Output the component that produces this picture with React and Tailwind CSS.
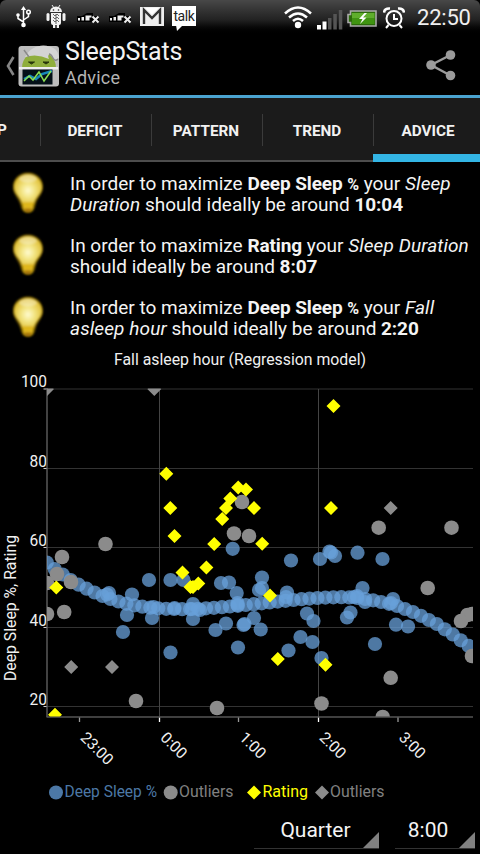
import { useId } from 'react';

const TABS = ['DEFICIT', 'PATTERN', 'TREND', 'ADVICE'];

const Y_TICKS = [
  { label: '100', y: 389 },
  { label: '80', y: 468.5 },
  { label: '60', y: 547.5 },
  { label: '40', y: 627.5 },
  { label: '20', y: 706.5 },
];

const X_TICKS = [
  { label: '23:00', x: 79.5 },
  { label: '0:00', x: 159.5, major: true },
  { label: '1:00', x: 238.5 },
  { label: '2:00', x: 318.5, major: true },
  { label: '3:00', x: 398 },
];

// Regression curve, one sample every 6 minutes
const CURVE_START = 46.8;
const CURVE_STEP = 7.96;
const CURVE = [
  562.5, 569, 574.5, 580, 584.7, 588.7, 592.5, 596, 599, 601.5, 603.7, 605.3, 606.7, 607.7,
  608.3, 608.8, 609, 609.2, 609.1, 608.8, 608.3, 607.8, 607.2, 606.5, 605.8, 605, 604.2,
  603.3, 602.5, 601.6, 600.8, 600, 599.2, 598.6, 598, 597.6, 597.3, 597.2, 597.4, 597.9,
  599, 600.3, 602, 603.8, 606, 609, 612, 615.8, 620, 624, 629.3, 634.5, 640.3, 645.9,
];

const DEEP_SLEEP = [
  [149, 580], [132, 594.5], [127, 615], [123, 632], [152, 618], [107, 594.5], [109, 593],
  [153.5, 607], [170.5, 580], [183.5, 580], [193, 604], [193, 619], [170.5, 652.5],
  [174.5, 608], [192, 609], [200, 610], [221, 583], [229, 582.5], [232.7, 548.8],
  [236.7, 593], [237.5, 603], [237.5, 605], [215.5, 630], [226, 623.5], [238, 647.5],
  [243.5, 625], [244.5, 624], [254, 618], [260.7, 629.5], [262, 577.5], [259, 590],
  [262, 588], [291, 560.5], [287, 592.5], [286, 597], [288.5, 650.5], [307, 613.5],
  [313.5, 621], [300.5, 637], [312.5, 642], [321.5, 658], [320, 559], [329.5, 551.5],
  [331, 552.5], [335, 556], [357.5, 552.7], [382.5, 559], [362.5, 588], [354, 597],
  [357, 596], [365, 602], [393, 599], [391, 603], [350.5, 612.5], [347, 617.5],
  [396, 624.7], [408, 626.5], [375, 644],
];

const DEEP_SLEEP_OUTLIERS = [
  [62, 557], [105.5, 544], [57, 574], [71, 582], [47, 583], [47, 614], [64.2, 612],
  [136, 701], [217, 708], [242, 502], [234, 533.5], [249, 536], [321.5, 703.5],
  [378.7, 527.7], [451.5, 527.7], [427.7, 588], [461, 621], [467.5, 615], [472, 614],
  [472, 656], [390.7, 677.8], [382.7, 717],
];

const RATING = [
  [166.3, 473.7], [170.3, 508], [174.5, 536], [182.5, 572.5], [190.5, 587], [193, 587],
  [198.3, 583.5], [206.4, 567.5], [214.2, 544], [222.2, 519], [226, 508], [230.3, 498.5],
  [238.2, 487.5], [246, 489.5], [254, 508], [262.2, 543.7], [270, 595.5], [277.8, 659],
  [333.5, 406], [331, 508], [325.5, 664.7], [56.3, 587.5], [55, 714.7],
];

const RATING_OUTLIERS = [[47, 389], [154.3, 389], [71.2, 667], [112, 667], [390.7, 508]];

const diamond = ([x, y], r = 7) => `M${x} ${y - r}l${r} ${r}l${-r} ${r}l${-r} ${-r}z`;

const UsbIcon = () => (
  <svg className="w-[17px] h-[22px] shrink-0" viewBox="0 0 16 22" fill="none" stroke="#fff" strokeWidth="1.5">
    <path d="M8 3v15M8 16l-5.500-3.500V9M8 14l5-3.500V7" />
    <path d="M8 0l2.600 4H5.400z" fill="#fff" stroke="none" />
    <circle cx="8" cy="19" r="2.300" fill="#fff" stroke="none" />
    <circle cx="2.500" cy="9" r="1.800" fill="#fff" stroke="none" />
    <circle cx="13" cy="6" r="1.800" />
  </svg>
);

const DebugIcon = () => (
  <svg className="w-5 h-6 shrink-0" viewBox="0 0 20 24" fill="#f2f2f2">
    <path d="M4 7a6 5.500 0 0 1 12 0zM5 8h10v10q0 2-2 2v3h-2.300v-3H9.300v3H7v-3q-2 0-2-2z" />
    <path d="M6 0l2 3M14 0l-2 3" stroke="#f2f2f2" />
    <rect x="0.500" y="8" width="3" height="8" rx="1.500" />
    <rect x="16.500" y="8" width="3" height="8" rx="1.500" />
    <path d="M7 9l2 2l2-2l2 2M7 12l2 2l2-2l2 2M7 15l2 2l2-2l2 2M10 9v10" stroke="#666" strokeWidth="1" fill="none" />
    <circle cx="7.500" cy="5" r="0.800" fill="#222" />
    <circle cx="12.500" cy="5" r="0.800" fill="#222" />
  </svg>
);

const NoSignalIcon = () => (
  <svg className="w-[23px] h-3 shrink-0" viewBox="0 0 23 12">
    <path d="M0 4h5l5-3h6v3l6 0v6H0z" fill="#000" />
    <path d="M1 6h2v2.500H1zM4.500 5H7v3.500H4.500zM8.500 3.500h6v2h-2v3h-4z" fill="#eee" />
    <path d="M15.500 4.500l6 6M21.500 4.500l-6 6" stroke="#eee" strokeWidth="2" />
  </svg>
);

const MailIcon = () => (
  <svg className="w-6 h-[19px] shrink-0" viewBox="0 0 24 19">
    <path d="M0 0h24v19H0z" fill="#eee" />
    <path d="M4 17V3l8 8l8-8v14" fill="none" stroke="#333" strokeWidth="2.400" />
    <path d="M5 .8l7 6.700l7-6.700" fill="#fff" />
  </svg>
);

const WifiIcon = () => (
  <svg className="w-7 h-6 shrink-0" viewBox="0 0 28 24" fill="none" stroke="#fff" strokeWidth="2.500">
    <path d="M1 7.500q13-12 26 0M5 11.500q9-8 18 0M9 15q5-4.500 10 0" />
    <circle cx="14" cy="19" r="3.200" fill="#fff" stroke="none" />
  </svg>
);

const SignalIcon = () => (
  <svg className="w-[26px] h-5 shrink-0" viewBox="0 0 26 20">
    <path d="M0 15h4v4.500H0zM5.500 11.500h4v8h-4z" fill="#fff" />
    <path d="M11 8h3.500v11.500H11zM16.300 4h3.500v15.500h-3.500zM21.800 0h3.500v19.500h-3.500z" fill="#555" />
  </svg>
);

const BatteryIcon = () => (
  <svg className="w-[30px] h-[17px] shrink-0" viewBox="0 0 30 17">
    <path d="M3.500 1H29v15H3.500v-3.500H1v-8h2.500z" fill="#2c6a0a" stroke="#aaa" strokeWidth="1.600" />
    <path d="M5 3h22.500v5.500H5z" fill="#5fae2c" />
    <path d="M5 8.500h22.500V14H5z" fill="#3f9410" />
    <path d="M17.500 3l-5.500 6h3.500l-2.500 5l6.500-6.500h-3.500l4-4.500z" fill="#fff" />
  </svg>
);

const AlarmIcon = () => (
  <svg className="w-[22px] h-[22px] shrink-0" viewBox="0 0 22 22" fill="none" stroke="#fff" strokeWidth="2">
    <circle cx="11" cy="11.500" r="7.500" />
    <path d="M11 7v5h4M5.500 18l-2.500 3M16.500 18l2.500 3" />
    <path d="M1 5.500Q1.500 1 7 1.500M21 5.500Q20.500 1 15 1.500" strokeWidth="2.600" />
  </svg>
);

const StatusBar = () => (
  <div className="h-9 flex items-center bg-linear-to-b from-[#484848] via-[#222] via-55% to-black rounded-t-md pl-[15px]">
    <div className="-mt-[3px]"><UsbIcon /></div>
    <div className="ml-[14px] -mt-[2px]"><DebugIcon /></div>
    <div className="ml-[11px] -mt-px"><NoSignalIcon /></div>
    <div className="ml-[9px] -mt-px"><NoSignalIcon /></div>
    <div className="ml-2 -mt-[3px]"><MailIcon /></div>
    <div className="relative ml-2 -mt-[5px] w-6 h-5 bg-white text-[#222] text-[14px] leading-[20px] text-center">
      <span className="tracking-[-0.4px]">talk</span>
      <svg className="absolute left-1 top-[19px] w-2 h-[6px]" viewBox="0 0 8 6">
        <path d="M0 0h7L1 6z" fill="#fff" />
      </svg>
    </div>
    <div className="ml-[88px] -mt-px"><WifiIcon /></div>
    <div className="ml-[5px] mt-[3px]"><SignalIcon /></div>
    <div className="ml-1"><BatteryIcon /></div>
    <div className="ml-[6px] -mt-px"><AlarmIcon /></div>
    <div className="ml-3 text-[22px] leading-none tracking-[-0.2px] text-[#f0f0f0] whitespace-nowrap">22:50</div>
  </div>
);

const AppIcon = () => (
  <svg className="w-[42px] h-[42px] shrink-0" viewBox="0 0 42 42">
    <rect x="0.500" y="1" width="40.500" height="40.500" rx="3" fill="#bdbdbd" />
    <path d="M4 23C4 12 13 6 21 6s17 6 17 17z" fill="#8fae3c" />
    <path d="M7 12C14-1 28-2 37 4q4 4 4 9l-4 2l-5-6q-3 1-1 5q-12-6-24-2z" fill="#d4d4d4" />
    <path d="M6 5l5 7M31 9q2 0 4 4t5 1" stroke="#8a8a8a" strokeWidth="1.500" fill="none" />
    <path d="M10.500 17h6l-3 2zM25 17h6l-3 2z" fill="#26350a" stroke="#26350a" />
    <path d="M1 22h39v2.500H1z" fill="#eee" />
    <rect x="4.500" y="24.500" width="30" height="15" fill="#041018" />
    <path d="M6 34l6-3l6 3l6-5l10-3" stroke="#1689b8" strokeWidth="2.500" fill="none" />
    <path d="M6 36l5-5l4 4l6-8l5 9l7-10" stroke="#8be052" strokeWidth="1.500" fill="none" />
  </svg>
);

const ActionBar = () => (
  <header className="h-[59px] flex items-center pl-[5px] pr-6">
    <svg className="w-[10px] h-5 shrink-0 mt-px" viewBox="0 0 10 20" fill="none" stroke="#858585" strokeWidth="2.600">
      <path d="M8.500 1L3 10l5.500 9" />
    </svg>
    <div className="ml-[3px] mt-px"><AppIcon /></div>
    <div className="ml-[5px] -mt-[3px]">
      <h1 className="-mt-px mb-px text-[25px] leading-[28px] tracking-[-0.2px] text-[#f3f3f3]">SleepStats</h1>
      <p className="text-[18px] leading-[22px] tracking-[0.2px] text-[#b4b4b4]">Advice</p>
    </div>
    <svg className="w-[30px] h-8 ml-auto -mt-px" viewBox="0 0 30 32" fill="#9b9b9b">
      <path d="M24.500 6L5 16l19.500 10.500" fill="none" stroke="#9b9b9b" strokeWidth="2.400" />
      <circle cx="24.500" cy="6" r="4.800" />
      <circle cx="5" cy="16" r="4.800" />
      <circle cx="24.500" cy="26.500" r="4.800" />
    </svg>
  </header>
);

const TabBar = () => (
  <nav className="h-[67px] flex border-t-[3px] border-[#4aa3d0] bg-[#1b1b1b] text-[15.3px] font-bold text-[#f2f2f2] overflow-hidden">
    <div className="w-10 shrink-0 border-b-2 border-[#4d4d4d] leading-[65px]">
      <span className="-ml-[3px]">P</span>
    </div>
    {TABS.map((tab) => (
      <div
        key={tab}
        className={
          tab === 'ADVICE'
            ? 'w-[111px] shrink-0 flex items-center border-b-8 border-[#33b5e5]'
            : 'w-[111px] shrink-0 flex items-center border-b-2 border-[#4d4d4d]'
        }
      >
        <span
          className={
            tab === 'ADVICE'
              ? 'flex-1 h-8 mt-[7px] pr-[2px] border-l border-[#3b3b3b] text-center leading-[34px]'
              : 'flex-1 h-8 mt-px pr-[2px] border-l border-[#3b3b3b] text-center leading-[34px]'
          }
        >
          {tab}
        </span>
      </div>
    ))}
  </nav>
);

const Bulb = () => {
  const id = useId();
  return (
    <svg className="w-9 h-12 shrink-0" viewBox="0 0 36 48">
      <defs>
        <radialGradient id={`${id}glass`} cx="50%" cy="55%" r="58%">
          <stop offset="0" stopColor="#fffbd0" />
          <stop offset="0.400" stopColor="#f3e585" />
          <stop offset="1" stopColor="#dcb928" />
        </radialGradient>
        <filter id={`${id}glow`} x="-20%" y="-20%" width="140%" height="140%">
          <feGaussianBlur stdDeviation="1.300" />
        </filter>
        <filter id={`${id}soft`} x="-10%" y="-10%" width="120%" height="120%">
          <feGaussianBlur stdDeviation="0.900" />
        </filter>
      </defs>
      <path
        d="M18 3.500C9 3.500 3 10 3 18C3 25 8 28 10.500 36q1 7.500 7.500 8q6.500-.5 7.500-8c2-8 7.500-11 7.500-18C33 10 27 3.500 18 3.500z"
        fill="#6e5606"
        filter={`url(#${id}glow)`}
      />
      <g filter={`url(#${id}soft)`}>
        <path
          d="M18 5C10.500 5 4 10.500 4 18C4 25 10.500 27.500 12 35h12c1.500-7.500 8-10 8-17C32 10.500 25.500 5 18 5z"
          fill={`url(#${id}glass)`}
        />
        <path d="M12 33h12l-1 6q-1 4-5 4t-5-4z" fill="#dfb71c" />
        <path d="M14 39.500h8l-1 2q-1 1.500-3 1.500t-3-1.500z" fill="#a87410" />
        <ellipse cx="18" cy="9.500" rx="9" ry="4" fill="#fff" opacity="0.350" />
      </g>
    </svg>
  );
};

const Tip = ({ children }) => (
  <li className="h-[62px] flex pl-[10px] pt-[7px]">
    <Bulb />
    <p className="ml-[24px] mt-1 text-[19px] leading-[21px] whitespace-nowrap text-[#f4f4f4] [&_b]:tracking-[-0.1px] [&_i]:tracking-[0.1px]">
      {children}
    </p>
  </li>
);

const AdviceList = () => (
  <ul>
    <Tip>
      In order to maximize <b>Deep Sleep <span className="text-[16px] leading-none">%</span></b> your <i>Sleep</i>
      <br />
      <i>Duration</i> should ideally be around <b>10:04</b>
    </Tip>
    <Tip>
      In order to maximize <b>Rating</b> your <i>Sleep Duration</i>
      <br />
      should ideally be around <b>8:07</b>
    </Tip>
    <Tip>
      In order to maximize <b>Deep Sleep <span className="text-[16px] leading-none">%</span></b> your <i>Fall</i>
      <br />
      <i>asleep hour</i> should ideally be around <b>2:20</b>
    </Tip>
  </ul>
);

const SleepChart = () => {
  const clipId = useId();
  return (
    <svg className="block w-[480px] h-[464px]" viewBox="0 348 480 464" fontFamily="Roboto, sans-serif" fontSize="16">
      <defs>
        <clipPath id={clipId}>
          <rect x="47" y="388.500" width="426" height="328" />
        </clipPath>
      </defs>

      <text x="114" y="365" fill="#f0f0f0" textLength="252" lengthAdjust="spacingAndGlyphs">
        Fall asleep hour (Regression model)
      </text>
      <text
        transform="translate(16 681) rotate(-90)"
        fill="#f0f0f0"
        textLength="146"
        lengthAdjust="spacingAndGlyphs"
      >
        Deep Sleep %, Rating
      </text>

      {/* Axes and grid */}
      {Y_TICKS.map(({ label, y }) => (
        <g key={label}>
          <path d={`M47 ${y}H473`} stroke="#333" />
          <path d={`M43.500 ${y}H47`} stroke="#ccc" />
          <text x="47" y={y - 2} textAnchor="end" fill="#f0f0f0" textLength={label.length * 8.7} lengthAdjust="spacingAndGlyphs">
            {label}
          </text>
        </g>
      ))}
      {X_TICKS.map(({ label, x, major }) => (
        <g key={label}>
          {major && <path d={`M${x} 389V717`} stroke="#444" />}
          <path d={`M${x} 717v5`} stroke={major ? '#fff' : '#999'} strokeWidth="1.300" />
          <text transform={`translate(${x} 738.500) rotate(45)`} fill="#f0f0f0" fontSize="15.600">
            {label}
          </text>
        </g>
      ))}
      <path d="M47 388V717" stroke="#666" strokeWidth="1.300" />
      <path d="M46.500 717H473" stroke="#555" strokeWidth="1.500" />

      {/* Data */}
      <g clipPath={`url(#${clipId})`}>
        <g fill="#68a0da" fillOpacity="0.750">
          {CURVE.map((y, i) => (
            <circle key={i} cx={CURVE_START + i * CURVE_STEP} cy={y} r="7.100" />
          ))}
          {DEEP_SLEEP.map(([x, y], i) => (
            <circle key={i} cx={x} cy={y} r="7.100" />
          ))}
        </g>
        <g fill="#8b8b8b">
          {DEEP_SLEEP_OUTLIERS.map(([x, y], i) => (
            <circle key={i} cx={x} cy={y} r="7.300" />
          ))}
        </g>
        <path d={RATING.map((p) => diamond(p)).join('')} fill="#ff0" />
        <path d={RATING_OUTLIERS.map((p) => diamond(p)).join('')} fill="#8b8b8b" />
      </g>

      {/* Legend */}
      <circle cx="56" cy="792.500" r="7" fill="#4c78a6" />
      <text x="64.500" y="797" fill="#4c78a6" textLength="92.500" lengthAdjust="spacingAndGlyphs">Deep Sleep %</text>
      <circle cx="170.700" cy="792.500" r="7" fill="#8b8b8b" />
      <text x="179" y="797" fill="#808080" textLength="54.500" lengthAdjust="spacingAndGlyphs">Outliers</text>
      <path d={diamond([254, 792.5])} fill="#ff0" />
      <text x="262.500" y="797" fill="#ff0" textLength="45.500" lengthAdjust="spacingAndGlyphs">Rating</text>
      <path d={diamond([322, 792.5])} fill="#8b8b8b" />
      <text x="330" y="797" fill="#808080" textLength="54.500" lengthAdjust="spacingAndGlyphs">Outliers</text>
    </svg>
  );
};

const Spinner = ({ label, className }) => (
  <button className={`relative h-[37px] border-b border-[#333] text-[21px] leading-[36px] text-[#f4f4f4] ${className}`}>
    {label}
    <svg className="absolute right-0 bottom-0 w-4 h-4" viewBox="0 0 16 16">
      <path d="M16 0v16H0z" fill="#808080" />
    </svg>
  </button>
);

export default function App() {
  return (
    <div className="w-[480px] h-[854px] flex flex-col overflow-hidden bg-black font-['Roboto',sans-serif]">
      <StatusBar />
      <ActionBar />
      <TabBar />
      <AdviceList />
      <SleepChart />
      <footer className="flex justify-end gap-4 pr-[5px]">
        <Spinner label="Quarter" className="w-[125px] pr-[2px]" />
        <Spinner label="8:00" className="w-20 pr-[14px]" />
      </footer>
    </div>
  );
}
